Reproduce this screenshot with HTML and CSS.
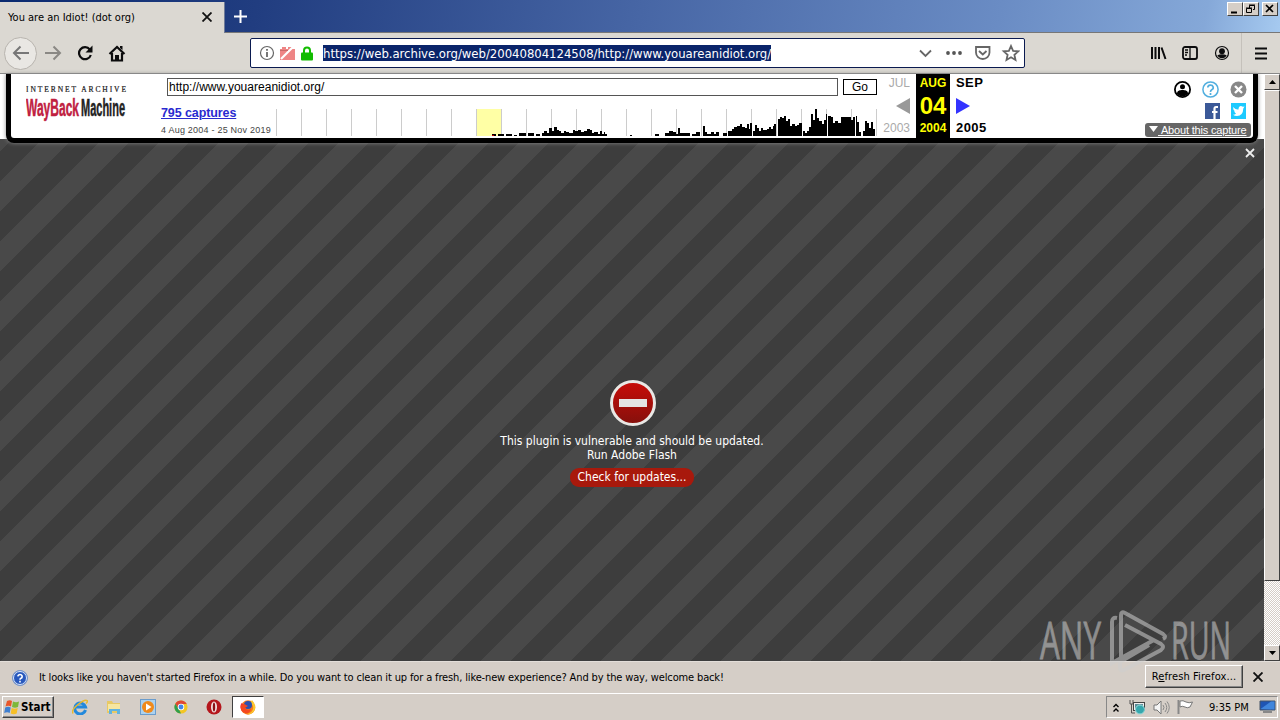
FILE: index.html
```html
<!DOCTYPE html>
<html lang="en">
<head>
<meta charset="utf-8">
<title>You are an Idiot! (dot org)</title>
<link rel="stylesheet" href="styles.css">
</head>
<body>
<header class="titlebar">
  <div class="tab"><span class="t-tab">You are an Idiot! (dot org)</span>
    <svg class="tab-x" width="10" height="10"><path d="M.5.500l9 9M9.500.500l-9 9" stroke="#111" stroke-width="1.800"/></svg></div>
  <svg class="plus" width="15" height="15"><path d="M7.500 1v13M1 7.500h13" stroke="#fff" stroke-width="2"/></svg>
  <div class="winbtns">
    <span class="wb"><svg width="14" height="12"><path d="M3 9.500h6" stroke="#000" stroke-width="2"/></svg></span>
    <span class="wb"><svg width="14" height="12"><path d="M5.500 5V2.500h5v4H9M5 2h6M2.500 5.500h5v4h-5zM2 5h6" fill="none" stroke="#000"/></svg></span>
    <span class="wb close"><svg width="14" height="12"><path d="M3 2l7 7M10 2l-7 7" stroke="#000" stroke-width="1.700"/></svg></span>
  </div>
</header>
<nav class="toolbar">
  <span class="back"><svg width="18" height="16"><path d="M17 8H2M8.500 1.500L2 8l6.500 6.500" fill="none" stroke="#777" stroke-width="2"/></svg></span>
  <svg class="fwd" width="18" height="16"><path d="M1 8h15M9.500 1.500L16 8l-6.500 6.500" fill="none" stroke="#8a8884" stroke-width="2"/></svg>
  <svg class="reload" width="17" height="16"><path d="M12.800 4.500A6 6 0 1 0 13.800 10" fill="none" stroke="#0c0c0d" stroke-width="2.200"/><path d="M15.500 .5v7h-7z" fill="#0c0c0d"/></svg>
  <svg class="home" width="18" height="17"><path d="M1.500 9L9 2l7.500 7M4 8v7.500h10V8" fill="none" stroke="#0c0c0d" stroke-width="2.200"/><path d="M7 15v-5h4v5zM12 1h2.500v4L12 3z" fill="#0c0c0d"/></svg>
  <div class="urlbar">
    <svg class="info" width="16" height="16"><circle cx="8" cy="8" r="6.500" fill="none" stroke="#666" stroke-width="1.200"/><path d="M8 7v5M8 4v1.800" stroke="#555" stroke-width="1.600"/></svg>
    <svg class="blocked" width="15" height="14"><path d="M0 3h2V1h4v2h2V1h4v2h3v11H0z" fill="#ee8585"/><path d="M1 13L14 0" stroke="#fff" stroke-width="2.200"/><path d="M0 4.500h8" stroke="#c96b6b"/></svg>
    <svg class="lock" width="12" height="15"><path d="M3 7V4.500a3 3 0 0 1 6 0V7" fill="none" stroke="#12bc00" stroke-width="2"/><rect y="6.500" width="12" height="8" rx="1" fill="#12bc00"/></svg>
    <span class="t-url">https://web.archive.org/web/20040804124508/http://www.youareanidiot.org/</span>
    <svg class="u-icons" width="102" height="18" fill="none" stroke="#666" stroke-width="1.800"><path d="M2 6.500l5.500 5.500L13 6.500"/><g fill="#555" stroke="none"><circle cx="30" cy="9" r="1.900"/><circle cx="36" cy="9" r="1.900"/><circle cx="42" cy="9" r="1.900"/></g><path d="M58 3h13.500v5.500a6.750 6.500 0 0 1-13.500 0zM61 7l3.800 3.500L68.500 7"/><path d="M93 2l2.100 4.800 5.200.5-3.900 3.500 1.100 5.200-4.500-2.700-4.500 2.700 1.100-5.200-3.900-3.500 5.200-.5z"/></svg>
  </div>
  <svg class="lib" width="17" height="16"><path d="M2 2v12M5.500 2v12M9 2v12M11.500 2.500L15.500 14" stroke="#0c0c0d" stroke-width="2"/></svg>
  <svg class="side" width="16" height="14"><rect x="1" y="1" width="14" height="12" rx="2" fill="none" stroke="#0c0c0d" stroke-width="1.800"/><path d="M8 1v12M3 4h3M3 6.500h3M3 9h2" stroke="#0c0c0d" stroke-width="1.300"/></svg>
  <svg class="acct" width="16" height="16"><circle cx="8" cy="8" r="6.500" fill="none" stroke="#0c0c0d" stroke-width="1.200"/><circle cx="8" cy="6.200" r="2.900" fill="#0c0c0d"/><path d="M3.300 10.200Q8 8.500 12.700 10.200A5.200 5.200 0 0 1 3.300 10.200z" fill="#0c0c0d"/></svg>
  <span class="sep"></span>
  <svg class="menu" width="12" height="13"><path d="M0 1.500h12M0 6.500h12M0 11.500h12" stroke="#0c0c0d" stroke-width="2"/></svg>
</nav>
<main class="view">
  <section class="page">
    <div class="plugin">
      <svg class="stop" width="48" height="48"><defs><linearGradient id="rd" x2="0" y2="1"><stop stop-color="#c90c08"/><stop offset="1" stop-color="#84100c"/></linearGradient></defs><circle cx="24" cy="24" r="21.500" fill="url(#rd)" stroke="#e9e8e5" stroke-width="3"/><path d="M10 24h28" stroke="#e4e4e4" stroke-width="8"/></svg>
      <span class="t-vul">This plugin is vulnerable and should be updated.</span>
      <span class="t-run">Run Adobe Flash</span>
      <span class="check">Check for updates...</span>
    </div>
    <div class="wayback">
      <svg class="wm-logo" width="106" height="46"><text x="0" y="9" class="ia" textLength="100">INTERNET ARCHIVE</text><text x="0" y="33" class="wm" fill="#c02040" stroke="#c02040" textLength="53" lengthAdjust="spacingAndGlyphs">WayBack</text><text x="55" y="33" class="wm" fill="#222" stroke="#222" textLength="44" lengthAdjust="spacingAndGlyphs">Machine</text></svg>
      <div class="mid">
        <div class="form"><span class="field">http://www.youareanidiot.org/</span><span class="go">Go</span></div>
        <div class="hist">
          <div class="caps"><a>795 captures</a><small>4 Aug 2004 - 25 Nov 2019</small></div>
          <svg class="spark" width="601" height="27">
            <defs><pattern id="yr" width="25" height="27" patternUnits="userSpaceOnUse"><rect width="1" height="27" fill="#ccc"/></pattern></defs>
            <rect x="200" width="26" height="27" fill="#ffffa5"/><rect width="601" height="27" fill="url(#yr)"/>
            <path d="M216 27V25H220V27H222V25H228V27H230V25H236V27H238V26H241V27H243V24H250V27H252V24H258V27H260V25H264V27H266V24H268V22H271V24H273V19H276V22H278V18H281V21H283V22H285V24H288V22H290V23H293V24H297V21H299V22H302V21H305V23H308V22H311V20H314V21H316V24H318V23H322V25H324V22H326V25H328V23H329V25H331V27H354V26H356V27H379V25H383V27H389V24H393V22H397V23H400V25H402V19H404V24H414V27H416V25H420V23H424V27H427V17H429V23H431V25H435V23H438V25H440V23H443V27H447V24H451V27H452V22H456V20H458V18H461V17H464V15H466V18H469V19H471V15H473V20H474V14H476V27H477V22H479V16H481V19H483V22H485V19H487V21H491V20H493V18H495V20H497V17H498V15H500V27H502V10H504V8H506V9H508V7H510V12H512V10H514V17H516V15H519V17H521V16H523V14H526V27H527V22H529V24H531V22H533V18H535V5H537V11H539V0H541V9H543V12H546V15H548V11H550V5H551V27H552V7H555V8H557V14H559V12H562V14H565V8H575V11H577V8H579V27H580V7H581V13H583V23H585V27H587V22H589V12H591V14H593V19H595V13H597V20H599V27Z"/><path d="M216 26h2v1h-2z" fill="#c00"/>
          </svg>
        </div>
      </div>
      <div class="dates">
        <div class="col prev"><span>JUL</span><svg width="14" height="16"><path d="M14 0v16L0 8z" fill="#999"/></svg><span>2003</span></div>
        <div class="col cur"><b>AUG</b><b class="day">04</b><b>2004</b></div>
        <div class="col next"><b>SEP</b><svg width="14" height="16"><path d="M0 0v16l14-8z" fill="#33f"/></svg><b>2005</b></div>
      </div>
      <div class="right">
        <div class="icons">
          <svg width="17" height="17"><circle cx="8.500" cy="8.500" r="7.600" fill="#fff" stroke="#000" stroke-width="1.800"/><circle cx="8.500" cy="5.800" r="2.500"/><path d="M3 12.500c0-3 3-3.500 5.500-3.500S14 9.500 14 12.500a6.500 6.500 0 0 1-11 0z"/></svg>
          <svg width="17" height="17"><circle cx="8.500" cy="8.500" r="7.600" fill="#fff" stroke="#52afdf" stroke-width="1.500"/><path d="M5.800 6.500a2.700 2.500 0 1 1 3.900 2.300Q8.500 9.500 8.500 11M8.500 12v2" fill="none" stroke="#52afdf" stroke-width="1.700"/></svg>
          <svg width="17" height="17"><circle cx="8.500" cy="8.500" r="8" fill="#888"/><path d="M5 5l7 7M12 5l-7 7" stroke="#fff" stroke-width="2.400"/></svg>
        </div>
        <div class="icons social">
          <svg width="15" height="16"><rect width="15" height="16" fill="#3b5998"/><path d="M13 4h-2q-1.500 0-1.500 2v10M7 9h5.500" stroke="#fff" stroke-width="2.200" fill="none"/></svg>
          <svg width="15" height="16"><rect width="15" height="16" fill="#1dcaff"/><path d="M2 4q3 3 5.500 2.500Q7.500 3 10 3l2 .8 1.500-.3-1.200 2Q12 13 6 13q-2.500 0-4-1.200 2 0 3-1L3 8.500l1-.2Q2 7 2 4z" fill="#fff"/></svg>
        </div>
        <span class="about"><svg width="9" height="6"><path d="M0 0h9L4.500 6z" fill="#fff"/></svg><u>&nbsp;About this capture</u></span>
      </div>
    </div>
    <svg class="plug-x" width="10" height="10"><path d="M1 1l8 8M9 1L1 9" stroke="#eee" stroke-width="1.800"/></svg>
  </section>
  <aside class="scroll">
    <span class="sb"><svg width="7" height="4"><path d="M0 4h7L3.500 0z"/></svg></span>
    <span class="thumb"></span><span class="track"></span>
    <span class="sb"><svg width="7" height="4"><path d="M0 0h7L3.500 4z"/></svg></span>
  </aside>
</main>
<section class="notice">
  <svg width="16" height="16"><circle cx="8" cy="8" r="7.500" fill="#3868c8" stroke="#7895c8"/><circle cx="8" cy="8" r="6.500" fill="#2858bd" stroke="#dce8fa"/><path d="M5.800 6.300a2.200 2 0 1 1 3.200 2Q8 8.700 8 9.700M8 10.800v1.700" fill="none" stroke="#fff" stroke-width="1.600"/></svg>
  <span class="t-note">It looks like you haven't started Firefox in a while. Do you want to clean it up for a fresh, like-new experience? And by the way, welcome back!</span>
  <span class="refresh">R<u>e</u>fresh Firefox...</span>
  <svg class="note-x" width="10" height="10"><path d="M.5.500l9 9M9.500.500l-9 9" stroke="#111" stroke-width="1.900"/></svg>
</section>
<footer class="taskbar">
  <div class="start"><svg width="17" height="16"><path d="M3 2q3-1.500 5 0L7 7.500q-2.500-1.500-5.500 0z" fill="#e8562a"/><path d="M9 2.500q3 1.500 6 0L14 8q-3 1.500-6 0z" fill="#7db83a"/><path d="M1.200 8.500q3-1.500 5.500 0L5.700 14q-2.500-1.500-5.500 0z" fill="#3f7fd0"/><path d="M7.700 9q3 1.500 6 0l-1 5.500q-3 1.500-6 0z" fill="#f6bf26"/></svg><b>Start</b></div>
  <div class="launch">
    <svg width="16" height="16"><path d="M13.500 11A5.500 5.500 0 1 1 13.500 8H4" fill="none" stroke="#2389dc" stroke-width="3"/><path d="M1 14.500Q-1 11 6 5.500 13 0 15 1.500q1 1-1 3" fill="none" stroke="#e7b92e" stroke-width="1.500"/></svg>
    <svg width="16" height="16"><path d="M1 2h5l1 2h7v10H1z" fill="#e8c964"/><path d="M2 5h12v7H2z" fill="#f6e6a0"/><path d="M3 15v-5h11v5h-3v-3H6v3z" fill="#61b3df"/></svg>
    <svg width="16" height="16"><rect x=".5" y=".5" width="15" height="15" fill="#acd2ef" stroke="#6a9ccc"/><circle cx="8" cy="8" r="6" fill="#f08a1c"/><path d="M6 4.500L11.500 8 6 11.500z" fill="#fff"/></svg>
    <svg width="14" height="14" viewBox="0 0 16 16"><circle cx="8" cy="8" r="7.500" fill="#f3c623"/><path d="M1.500 4.200A7.500 7.500 0 0 1 14.500 4.500H8L5 10z" fill="#df4735"/><path d="M1.500 4.200L6 11.500 8 15.500A7.500 7.500 0 0 1 1.500 4.200z" fill="#2f9e4e"/><circle cx="8" cy="8" r="3.700" fill="#fff"/><circle cx="8" cy="8" r="2.800" fill="#4285e8"/></svg>
    <svg width="16" height="16"><circle cx="8" cy="8" r="7.500" fill="#b5161c"/><ellipse cx="8" cy="8" rx="3" ry="5.500" fill="#f3e4e4"/><ellipse cx="8" cy="8" rx="1.200" ry="4.600" fill="#8b0f14"/></svg>
  </div>
  <div class="active"><svg width="16" height="16"><circle cx="8" cy="8.500" r="7.200" fill="#f57b1c"/><path d="M12 1q4 4 3.200 8.500A7 7 0 0 1 7 15q5-1 6-5t-3-6z" fill="#fcc92d"/><path d="M2 12a7 7 0 0 1-.5-8l3 2z" fill="#e42b3e"/><circle cx="8" cy="6" r="4" fill="#2a50b0"/><path d="M1 6q3-2 5 0l2 1-3 2q2 3 6 1-1 5-6 4T1 6z" fill="#f4481f"/></svg></div>
  <div class="tray">
    <svg width="8" height="11"><path d="M1.500 5L4 2.500 6.500 5M1.500 9.500L4 7l2.500 2.500" fill="none" stroke="#000" stroke-width="1.400"/></svg>
    <svg class="net" width="17" height="16"><path d="M1 1v4h3V1M2.500 5v9H6" stroke="#555" fill="none"/><rect x="4.500" y="3.500" width="11" height="8" fill="#eee" stroke="#444"/><rect x="6" y="5" width="8" height="5" fill="#5b8c98"/><circle cx="11" cy="10.500" r="4.500" fill="#36a7ad" stroke="#9adada"/></svg>
    <svg class="vol" width="17" height="15"><path d="M1 5h3l4-4v13l-4-4H1z" fill="#f4f4f4" stroke="#777"/><path d="M10 5q2 2.500 0 5M12 3q3.500 4.500 0 9M14 1.500q4.500 6 0 12" fill="none" stroke="#888"/></svg>
    <svg class="flag" width="17" height="16"><path d="M1.500 1v14" stroke="#888" stroke-width="2"/><path d="M3 2q3-1 6 1 3 1.500 6.500 0L13 8Q10 9.500 8 8 5 6.500 3 8z" fill="#fff" stroke="#777"/></svg>
    <span class="t-clock">9:35 PM</span>
    <svg class="mon" width="17" height="14"><path d="M1 1h15v9H1z" fill="#1e55b4" stroke="#456"/><path d="M1.500 9L12 1.500h3.500v8z" fill="#4086dc"/><path d="M4 12h9" stroke="#888" stroke-width="2"/></svg>
  </div>
</footer>
<svg class="anyrun" width="200" height="72" viewBox="0 0 200 72"><g opacity=".55"><text x="2" y="51" textLength="61" lengthAdjust="spacingAndGlyphs">ANY</text><text x="133" y="51" textLength="60" lengthAdjust="spacingAndGlyphs">RUN</text><path d="M79 10q-5-1-5 4v41L115 32.500M83 51V7q0-4 4-2l38 21q4 3 0 5M87 17l36 19q4 3 0 6L86 62q-4 2-4-3v-5l29-17" fill="none" stroke="#cfcfcf" stroke-width="4"/></g></svg>
</body>
</html>
```
FILE: styles.css
```css
* { box-sizing: border-box; }
svg { display: block; flex: none; }
body { margin: 0; width: 1280px; height: 720px; overflow: hidden; display: flex; flex-direction: column; position: relative; background: #d5cec7; font: 11px "DejaVu Sans Condensed", "DejaVu Sans", sans-serif; color: #000; white-space: nowrap; }

.titlebar { height: 33px; flex: none; display: flex; align-items: flex-start; background: linear-gradient(100deg, #0a2a70 0%, #213d80 20%, #4766a5 50%, #6a8cc4 78%, #85a8d8 94%, #a6caf0 100%); border-bottom: 1px solid #777; }
.tab { width: 225px; height: 31px; margin-top: 2px; padding: 0 12px 0 8px; display: flex; align-items: center; justify-content: space-between; background: #dbd8d2; border-right: 1px solid #6f7b98; }
.tab-x { margin-top: -1px; }
.plus { margin: 9px 0 0 8px; }
.winbtns { margin: 2px 2px 0 auto; display: flex; }
.wb { width: 16px; height: 14px; padding: 0; background: #d5cec7; border: 1px solid; border-color: #fff #404040 #404040 #fff; }
.wb.close { margin-left: 3px; }

.toolbar { height: 41px; flex: none; display: flex; align-items: center; background: #dbd8d2; border-bottom: 1px solid #888; }
.back { width: 33px; height: 33px; margin-left: 4px; border: 1px solid #b8b4ae; border-radius: 50%; background: #e9e7e3; display: grid; place-items: center; }
.fwd { margin-left: 7px; }
.reload { margin-left: 15px; }
.home { margin-left: 14px; }
.urlbar { width: 775px; height: 30px; margin-left: 124px; display: flex; align-items: center; background: #fff; border: 1px solid #0a1a50; border-radius: 2px; }
.info { margin-left: 8px; }
.blocked { margin-left: 5px; }
.lock { margin-left: 6px; }
.t-url { margin-left: 10px; height: 16px; line-height: 17px; background: #0a246a; color: #fff; font-size: 13px; letter-spacing: -.03px; }
.u-icons { margin-left: auto; margin-right: 4px; }
.lib { margin-left: 125px; }
.side { margin-left: 15px; }
.acct { margin-left: 16px; }
.sep { width: 1px; height: 40px; margin-left: 11px; background: #c5c1bb; }
.menu { margin-left: 13px; }

.view { height: 587px; flex: none; display: flex; }
.page { width: 1264px; position: relative; background: #fff; padding-top: 65px; }
.plugin { height: 522px; padding-top: 240px; display: flex; flex-direction: column; align-items: center; color: #fff; font-size: 12px; line-height: 14px; background: linear-gradient(135deg, #494949 25%, #3d3d3d 25% 50%, #494949 50% 75%, #3d3d3d 75%) 43px 0 / 60px 60px; }
.stop { margin: 0 0 7px 2px; }
.check { margin-top: 6px; height: 19px; line-height: 19px; padding: 0 8px; border-radius: 9px; background: #a8190c; }
.plug-x { position: absolute; left: 1245px; top: 74px; }

.wayback { position: absolute; left: 6px; top: 0; width: 1252px; height: 69px; display: flex; background: #fff; border: 5px solid #000; border-top: 0; border-radius: 0 0 8px 8px; box-shadow: 0 0 4px #888; font-family: "Liberation Sans", Arial, sans-serif; }
.wm-logo { margin: 9px 0 0 15px; }
.ia { font: 7.500px "Liberation Serif", serif; fill: #222; stroke: #222; stroke-width: .2; }
.wm { font: bold 24px "Liberation Sans", sans-serif; stroke-width: .5; }
.mid { width: 716px; margin-left: 29px; }
.form { display: flex; height: 35px; padding: 4px 0 0 6px; }
.field { width: 671px; height: 18px; padding-left: 1px; border: 1px solid #555; font-size: 12px; line-height: 16px; letter-spacing: .02px; }
.go { width: 34px; height: 16px; margin: 1px 0 0 5px; border: 1px solid #000; text-align: center; font-size: 12px; line-height: 14px; }
.hist { display: flex; }
.caps { width: 115px; display: flex; flex-direction: column; margin-top: -3px; }
.caps a { align-self: flex-start; color: #2a2ad0; font-weight: bold; font-size: 12.500px; line-height: 15px; text-decoration: underline; letter-spacing: -.1px; }
.caps small { margin-top: 3px; font-size: 9px; line-height: 12px; color: #444; letter-spacing: .22px; }
.dates { display: flex; margin-left: 3px; font-size: 12px; }
.col { width: 34px; display: flex; flex-direction: column; height: 64px; justify-content: space-between; padding: 2px 0 3px; line-height: 14px; }
.prev { width: 36px; color: #aaa; align-items: flex-end; padding-right: 6px; }
.cur { background: #000; color: #ff0; align-items: center; }
.day { font-size: 24px; line-height: 24px; }
.next { padding-left: 6px; width: 50px; align-items: flex-start; font-size: 13px; letter-spacing: .4px; }
.right { width: 108px; margin-left: auto; padding-top: 7px; display: flex; flex-direction: column; align-items: flex-end; }
.icons { display: flex; gap: 11px; padding-right: 6px; }
.social { margin-top: 5px; padding-right: 7px; }
.about { width: 106px; height: 14px; margin: 4px 2px 0 0; padding: 0 5px 0 4px; display: flex; align-items: center; background: #666; color: #fff; border-radius: 3px; font-size: 11px; letter-spacing: -.17px; }
.about svg { margin-top: -3px; }

.scroll { width: 16px; display: flex; flex-direction: column; background: #d5cec7; }
.sb, .thumb { border: 1px solid; border-color: #fff #404040 #404040 #fff; background: #d5cec7; }
.sb { height: 16px; display: grid; place-items: center; }
.thumb { height: 491px; }
.track { flex: 1; background: repeating-conic-gradient(#fff 0 25%, #d5cec7 0 50%) 0 0 / 2px 2px; }

.notice { height: 32px; flex: none; display: flex; align-items: center; padding-left: 12px; border-top: 1px solid #e3ded9; }
.t-note { margin-left: 11px; letter-spacing: -.14px; }
.refresh { width: 98px; height: 23px; margin: -3px 0 0 auto; border: 1px solid; border-color: #fff #404040 #404040 #fff; box-shadow: inset -1px -1px #888; line-height: 21px; text-align: center; letter-spacing: .1px; }
.note-x { margin: -1px 17px 0 10px; }

.taskbar { height: 27px; flex: none; display: flex; align-items: center; border-top: 1px solid #fff; }
.start { width: 52px; height: 22px; margin-left: 2px; padding-left: 1px; display: flex; align-items: center; border: 1px solid; border-color: #fff #404040 #404040 #fff; box-shadow: inset -1px -1px #888; font-size: 11.500px; }
.launch { display: flex; align-items: center; gap: 18px; margin-left: 18px; }
.active { width: 32px; height: 22px; margin-left: 10px; display: grid; place-items: center; background: #fff; border: 1px solid; border-color: #404040 #fff #fff #404040; }
.tray { width: 172px; height: 22px; margin: 0 2px 0 auto; padding-left: 5px; display: flex; align-items: center; border: 1px solid; border-color: #888 #fff #fff #888; }
.net { margin-left: 9px; }
.vol, .flag { margin-left: 7px; }
.t-clock { margin-left: 15px; }
.mon { margin-left: auto; margin-right: 1px; }

.anyrun { position: absolute; left: 1038px; top: 608px; }
.anyrun text { font: 52px "Open Sans", sans-serif; fill: #cfcfcf; stroke: #cfcfcf; stroke-width: .8; }
```
